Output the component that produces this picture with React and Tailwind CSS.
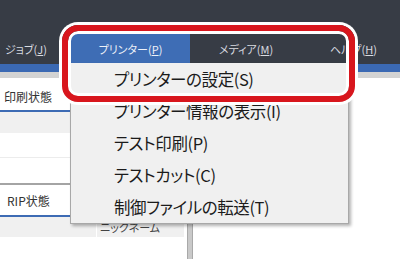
import React from "react";

const jp = "[font-family:'Noto_Sans_CJK_JP','Noto_Sans',sans-serif] [font-feature-settings:'palt']";

function Mn({ children }) {
  return <span className="underline underline-offset-1">{children}</span>;
}

export default function App() {
  const items = [
    "プリンターの設定(S)",
    "プリンター情報の表示(I)",
    "テスト印刷(P)",
    "テストカット(C)",
    "制御ファイルの転送(T)",
  ];

  return (
    <div className={`relative w-[400px] h-[259px] overflow-hidden bg-white ${jp}`}>
      {/* header + menubar */}
      <div className="h-[64px] bg-[#373c45] flex flex-col justify-end">
        <div className="h-[30px] flex text-[11px] text-[#d9dbe0]">
          <div className="w-[71px] pl-[5px] flex items-center">
            ジョブ(<Mn>J</Mn>)
          </div>
          <div className="w-[119px] bg-[#3e6db5] flex items-center justify-center text-[#eef1f8]">
            プリンター(<Mn>P</Mn>)
          </div>
          <div className="w-[112px] flex items-center justify-center">
            メディア(<Mn>M</Mn>)
          </div>
          <div className="pl-[28px] flex items-center">
            ヘルプ(<Mn>H</Mn>)
          </div>
        </div>
      </div>
      <div className="h-[8px] bg-[#3b69b3]" />
      <div className="h-[6px] bg-[#d3d3d3]" />

      {/* body */}
      <div className="flex h-[181px]">
        <div className="w-[187px] flex flex-col text-[12px] text-[#333]">
          <div className="h-[32px] pt-[6px] pl-[4px] flex items-center">印刷状態</div>
          <div className="h-[2px] w-[70px] bg-[#3d6bb4]" />
          <div className="h-[21px] bg-[#f0f0f0]" />
          <div className="h-[25px] border-b border-[#ececec]" />
          <div className="h-[25px]" />
          <div className="h-[2px] bg-[#a4a4a4]" />
          <div className="h-[30px] pl-[7px] pt-[2px] flex items-center">RIP状態</div>
          <div className="h-[2px] w-[70px] bg-[#3d6bb4]" />
          <div className="h-[20px] w-[184px] bg-[#f0f0f0] flex text-[11px] text-[#444]">
            <div className="w-[97px] border-r border-white" />
            <div className="pl-[3px] flex items-center">ニックネーム</div>
          </div>
        </div>
        <div className="w-[6px] bg-[#c9c9c9] border-x border-[#a9a9a9]" />
        <div className="flex-1" />
      </div>

      {/* dropdown menu */}
      <div className="absolute left-[70px] top-[63px] w-[279px] bg-[#f0f0f0] border border-t-0 border-[#a8a8a8] shadow-[2px_2px_3px_rgba(0,0,0,0.3)]">
        {items.map((t) => (
          <div key={t} className="h-[32px] pl-[43px] flex items-center text-[16.5px] tracking-[-0.4px] text-[#1b1b1b]">
            {t}
          </div>
        ))}
      </div>

      {/* red highlight outline */}
      <div className="absolute left-[62px] top-[25px] w-[293px] h-[77px] rounded-[16px] border-[6px] border-[#d8161d] shadow-[0_0_0_3px_#fff,inset_0_0_0_3px_#fff] pointer-events-none" />
    </div>
  );
}
